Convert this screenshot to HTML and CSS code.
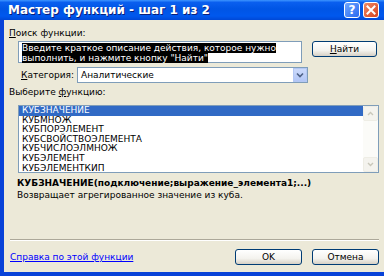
FILE: index.html
```html
<!DOCTYPE html>
<html>
<head>
<meta charset="utf-8">
<link rel="stylesheet" href="styles.css">
</head>
<body>
<div class="win">
  <div class="titlebar">
    <span class="title">Мастер функций - шаг 1 из 2</span>
    <div class="ctrls">
      <span class="tb help">?</span>
      <span class="tb close"><svg width="10" height="10" viewBox="0 0 10 10"><path d="M1.5 1.5 L8.5 8.5 M8.5 1.5 L1.5 8.5" stroke="#fff" stroke-width="2" stroke-linecap="square"/></svg></span>
    </div>
  </div>
  <div class="body">
    <div class="lbl"><u>П</u>оиск функции:</div>
    <div class="search-row">
      <div class="textarea">
        <div class="tline"><span class="sel">Введите краткое описание действия, которое нужно</span></div>
        <div class="tline"><span class="sel">выполнить, и нажмите кнопку "Найти"</span></div>
      </div>
      <div class="btn find"><u>Н</u>айти</div>
    </div>
    <div class="cat-row">
      <span class="cat-lbl"><u>К</u>атегория:</span>
      <div class="select">
        <span class="sel-val">Аналитические</span>
        <span class="arrow"><svg width="8" height="6" viewBox="0 0 8 6"><path d="M1 1.5 L4 4.5 L7 1.5" stroke="#4D6185" stroke-width="1.6" fill="none"/></svg></span>
      </div>
    </div>
    <div class="lbl lbl2">Выберите <u>ф</u>ункцию:</div>
    <div class="list">
      <div class="items">
        <div class="item active">КУБЗНАЧЕНИЕ</div>
        <div class="item">КУБМНОЖ</div>
        <div class="item">КУБПОРЭЛЕМЕНТ</div>
        <div class="item">КУБСВОЙСТВОЭЛЕМЕНТА</div>
        <div class="item">КУБЧИСЛОЭЛМНОЖ</div>
        <div class="item">КУБЭЛЕМЕНТ</div>
        <div class="item">КУБЭЛЕМЕНТКИП</div>
      </div>
      <div class="scroll">
        <span class="sbtn"><svg width="7" height="5" viewBox="0 0 7 5"><path d="M1 4 L3.5 1.5 L6 4" stroke="#C9C7BA" stroke-width="1.4" fill="none"/></svg></span>
        <span class="strack"></span>
        <span class="sbtn"><svg width="7" height="5" viewBox="0 0 7 5"><path d="M1 1 L3.5 3.5 L6 1" stroke="#C9C7BA" stroke-width="1.4" fill="none"/></svg></span>
      </div>
    </div>
    <div class="sig">КУБЗНАЧЕНИЕ(подключение;выражение_элемента1;...)</div>
    <div class="desc">Возвращает агрегированное значение из куба.</div>
    <div class="sep"></div>
    <div class="foot">
      <a class="help-link">Справка по этой функции</a>
      <div class="btn ok">OK</div>
      <div class="btn cancel">Отмена</div>
    </div>
  </div>
</div>
</body>
</html>
```

FILE: styles.css
```css
html, body {
  margin: 0;
  padding: 0;
}
body {
  width: 384px;
  height: 276px;
  overflow: hidden;
  font-family: "DejaVu Sans", sans-serif;
  font-size: 9px;
  color: #000;
}
.win {
  width: 384px;
  height: 276px;
  box-sizing: border-box;
  background: #ECE9D8;
  border-left: 4px solid #0842D8;
  border-bottom: 4px solid #0842D8;
  display: flex;
  flex-direction: column;
}
.titlebar {
  height: 20px;
  margin-left: -4px;
  padding: 0 5px 0 8px;
  display: flex;
  align-items: center;
  justify-content: space-between;
  background: linear-gradient(to bottom, #3D95FF 0%, #0A5FEF 12%, #0055E5 45%, #0058EE 80%, #0048D6 100%);
}
.title {
  color: #fff;
  font-weight: bold;
  font-size: 12px;
  text-shadow: 1px 1px 0 #0A1E7A;
}
.ctrls {
  display: flex;
  gap: 3px;
}
.tb {
  width: 16px;
  height: 16px;
  box-sizing: border-box;
  border: 1px solid #fff;
  border-radius: 3px;
  display: flex;
  align-items: center;
  justify-content: center;
  color: #fff;
  font-weight: bold;
  font-size: 12px;
}
.help {
  background: linear-gradient(135deg, #6FA6FF, #2A6AF0);
}
.close {
  background: linear-gradient(135deg, #F08A66, #D6431E);
}
.body {
  padding: 0 5px 0 5px;
  display: flex;
  flex-direction: column;
  flex: 1;
}
.lbl {
  margin-top: 8px;
  height: 11px;
  line-height: 11px;
}
.lbl2 {
  margin-top: 4px;
}
.search-row {
  margin-top: 2px;
  display: flex;
  align-items: flex-start;
}
.textarea {
  margin-left: 9px;
  width: 284px;
  height: 22px;
  box-sizing: border-box;
  border: 1px solid #7F9DB9;
  background: #fff;
  padding: 1px 0 0 3px;
}
.tline {
  height: 10px;
  line-height: 10px;
  white-space: nowrap;
}
.sel {
  background: #000;
  color: #fff;
}
.btn {
  height: 16px;
  box-sizing: border-box;
  border: 1px solid #003C74;
  border-radius: 3px;
  background: linear-gradient(to bottom, #FFFFFF 0%, #F4F3EE 60%, #D6D0C5 100%);
  display: flex;
  align-items: center;
  justify-content: center;
}
.find {
  margin-left: 10px;
  width: 65px;
}
.cat-row {
  margin-top: 4px;
  display: flex;
  align-items: center;
  height: 16px;
}
.cat-lbl {
  margin-left: 12px;
  width: 56px;
}
.select {
  width: 231px;
  height: 16px;
  box-sizing: border-box;
  border: 1px solid #7F9DB9;
  background: #fff;
  display: flex;
  align-items: center;
  justify-content: space-between;
  padding-left: 3px;
}
.arrow {
  width: 14px;
  height: 14px;
  box-sizing: border-box;
  background: linear-gradient(to bottom, #CCDAFB, #B2C6F6);
  border: 1px solid #B4C8F4;
  display: flex;
  align-items: center;
  justify-content: center;
}
.list {
  margin-top: 7px;
  margin-left: 9px;
  width: 361px;
  height: 68px;
  box-sizing: border-box;
  border: 1px solid #7F9DB9;
  background: #fff;
  display: flex;
}
.items {
  flex: 1;
}
.item {
  height: 9.6px;
  line-height: 9.6px;
  padding-left: 3px;
  white-space: nowrap;
}
.item.active {
  background: #316AC5;
  color: #fff;
}
.scroll {
  width: 15px;
  display: flex;
  flex-direction: column;
  background: #FBFBF8;
}
.sbtn {
  height: 15px;
  box-sizing: border-box;
  border: 1px solid #EEEDE5;
  border-radius: 2px;
  background: #F4F3EE;
  display: flex;
  align-items: center;
  justify-content: center;
}
.strack {
  flex: 1;
}
.sig {
  margin-top: 5px;
  margin-left: 8px;
  height: 11px;
  line-height: 11px;
  font-weight: bold;
  white-space: nowrap;
}
.desc {
  margin-top: 1px;
  margin-left: 8px;
  height: 11px;
  line-height: 11px;
}
.sep {
  margin-top: 38px;
  margin-left: 1px;
  height: 0;
  border-top: 1px solid #ACA899;
  border-bottom: 1px solid #fff;
}
.foot {
  margin-top: 8px;
  display: flex;
  align-items: center;
  height: 16px;
}
.help-link {
  margin-left: 1px;
  color: #0000FF;
  text-decoration: underline;
  flex: 1;
}
.ok {
  width: 67px;
}
.cancel {
  width: 67px;
  margin-left: 10px;
}
```
